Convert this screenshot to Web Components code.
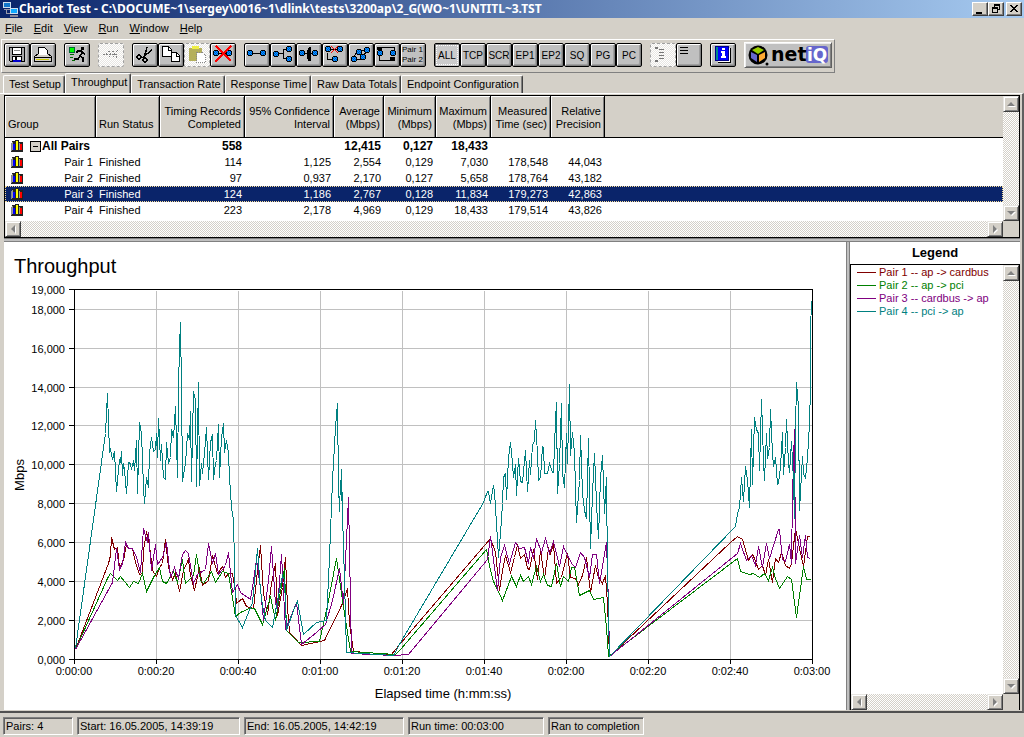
<!DOCTYPE html>
<html lang="en">
<head>
<meta charset="utf-8">
<title>Chariot Test</title>
<style>
  body {
    margin: 0;
    background: #d4d0c8;
    color: #000;
    font: 11px/13px "Liberation Sans", Arial, sans-serif;
  }
</style>
</head>
<body>
<chariot-app></chariot-app>

<script>
const BASE = `
  * { box-sizing: border-box; }
  button { font: inherit; color: inherit; margin: 0; padding: 0; border: 0; background: none; }
  svg { display: block; }
`;

function define(name, html, setup) {
  const template = document.createElement('template');
  template.innerHTML = html.replace('<style>', `<style>${BASE}`);
  customElements.define(name, class extends HTMLElement {
    constructor() {
      super();
      this._root = this.attachShadow({ mode: 'open' });
    }
    connectedCallback() {
      if (this._root.firstChild) return;
      this._root.appendChild(template.content.cloneNode(true));
      if (setup) setup(this, this._root);
    }
  });
}

/* ---------- title bar ---------- */
define('title-bar', `
<style>
  :host {
    display: flex;
    align-items: center;
    height: 18px;
    padding: 0 2px 0 3px;
    background: linear-gradient(90deg, #0a246a, #a6caf0);
    color: #fff;
    font: bold 12px/18px "Noto Sans", "DejaVu Sans", sans-serif;
    white-space: nowrap;
  }
  h1 { flex: 1; min-width: 0; overflow: hidden; margin: 0; font: inherit; }
  button {
    width: 16px; height: 14px;
    background: #d4d0c8;
    border: 1px solid;
    border-color: #fff #404040 #404040 #fff;
    box-shadow: inset -1px -1px #808080;
  }
  button:last-child { margin-left: 2px; }
</style>
<svg width="16" height="16" viewBox="0 0 16 16" shape-rendering="crispEdges">
  <path d="M0 1h8v6H0z" fill="#cde"/><path d="M1 2h6v4H1z" fill="#17c"/>
  <path d="M1 8h7v1H1zM3 9v4h5v-1H4V9z" fill="#99a"/>
  <path d="M7 7h8v6H7z" fill="#cde"/><path d="M8 8h6v4H8z" fill="#1af"/>
  <path d="M7 14h8v2H7z" fill="#889"/>
</svg>
<h1><slot></slot></h1>
<button aria-label="Minimize"><svg width="14" height="12" shape-rendering="crispEdges"><path d="M3 9h6v2H3z"/></svg></button>
<button aria-label="Restore"><svg width="14" height="12" shape-rendering="crispEdges"><path d="M5 1h6v6H9V6h1V3H6v1H5zM3 4h6v6H3zM4 6v3h4V6z" fill-rule="evenodd"/></svg></button>
<button aria-label="Close"><svg width="14" height="12" shape-rendering="crispEdges"><path d="M3 2h2v1h1v1h2V3h1V2h2v1h-1v1H9v1H8v1h1v1h1v1h1v1H9V8H8V7H6v1H5v1H3V8h1V7h1V6h1V5H5V4H4V3H3z"/></svg></button>
`);

/* ---------- menu ---------- */
define('menu-bar', `
<style>
  :host { display: flex; gap: 11px; height: 21px; padding: 0 5px; align-items: center; }
  button::first-letter { text-decoration: underline; }
</style>
`, (el, root) => {
  el.getAttribute('items').split(',').forEach(text => {
    const $b = document.createElement('button');
    $b.textContent = text;
    root.appendChild($b);
  });
});

/* ---------- toolbar ---------- */
const node = (x, y) => `<path d="M${x + 1} ${y}h4v1h1v4h-1v1h-4v-1h-1v-4h1z" fill="#000"/><path d="M${x + 1} ${y + 1}h4v4h-4z" fill="#0af"/><path d="M${x + 2} ${y + 1}h1v1h-1zM${x + 4} ${y + 1}h1v1h-1zM${x + 1} ${y + 2}h1v1h-1zM${x + 3} ${y + 2}h1v1h-1zM${x + 2} ${y + 3}h1v1h-1zM${x + 4} ${y + 3}h1v1h-1zM${x + 1} ${y + 4}h1v1h-1zM${x + 3} ${y + 4}h1v1h-1z" fill="#04c"/>`;
const line = d => `<path d="${d}" fill="none" stroke="#000"/>`;

const ICONS = {
  save: `<path d="M5 4h16v15H6l-1-1z" fill="#000"/><path d="M6 5h14v13H6z" fill="#aaa"/><path d="M8 5h10v7H8z" fill="#000"/><path d="M9 5h8v6H9z" fill="#fff"/><path d="M10 7h6v1h-6z" fill="#888"/><path d="M8 13h10v6H8z" fill="#000"/><path d="M9 14h8v3H9z" fill="#fff"/><path d="M9 17h8v2H9z" fill="#00c"/><path d="M11 14h2v3h-2z" fill="#000"/>`,
  print: `<path d="M8.500 4.500h6l3 3v5h-9z" fill="#fff" stroke="#000"/><path d="M4.500 13.500l4-3h9l4 3v5h-17z" fill="#d4d0c8" stroke="#000"/><path d="M5 14.500h16" stroke="#000"/><path d="M9 8h8v4H9z" fill="#fff"/><path d="M6 16.500h13" stroke="#cc0"/>`,
  run: `<circle cx="8" cy="7" r="3" fill="#0f0" stroke="#063"/><path d="M6 11.500h4M6 14.500h3M8 17.500h3" stroke="#060"/><path d="M17 4h3v3h-3z" fill="#000"/><path d="M12 10l2-2h3l1 2-2 3 3 2v4M16 13l-2 3h-4M18 9l3 2" fill="none" stroke="#000" stroke-width="1.500"/>`,
  stop: `<path d="M5 11h15M8 11l4-3M8 11l4 3M12 11l4-3M12 11l4 3M16 11l4-4M16 11l4 5" stroke="#808080" fill="none" stroke-dasharray="2 1"/>`,
  cut: `<path d="M15 4l-3 11M20 7l-9 7" stroke="#000" stroke-width="1.500" fill="none"/><circle cx="7" cy="14" r="2" fill="none" stroke="#000" stroke-width="1.500"/><circle cx="13" cy="17" r="2" fill="none" stroke="#000" stroke-width="1.500"/><path d="M9 14h4" stroke="#000"/>`,
  copy: `<path d="M4.500 3.500h6l3 3v7h-9zM13.500 9.500h5l3 3v6h-8z" fill="#fff" stroke="#000"/><path d="M10.500 4v3h3M18.500 10v3h3" fill="none" stroke="#000"/>`,
  paste: `<path d="M5 5h13v13H5z" fill="#b5b05c"/><path d="M8 3h7v3H8z" fill="#ee4"/><path d="M12.500 9.500h6l3 3v7h-9z" fill="#fff" stroke="#888" stroke-dasharray="1 1"/>`,
  del: `${node(3, 7)}${node(16, 7)}${line('M9 10.500h7')}<path d="M6 3l15 15M21 3L5 19" stroke="#f00" stroke-width="2" fill="none"/>`,
  pair: `${line('M9 10.500h8')}${node(3, 7)}${node(16, 7)}`,
  group: `${line('M8 10.500h5M17 6.500h-4v9h4')}${node(3, 8)}${node(16, 3)}${node(16, 13)}`,
  multi: `${line('M8 10.500h9')}<path d="M13 4h2v14h-3v-2h-1V7h1V5h1z"/>${node(3, 7)}${node(16, 7)}`,
  ungroup: `${line('M5.500 10v6h6M8 6.500h9')}${node(3, 3)}${node(15, 3)}${node(10, 13)}<path d="M9 3l7 7M16 3l-7 7" stroke="#f00"/>`,
  clone: `${line('M5 16l5-9h9l-5 9zM10 7l4 9')}${node(3, 13)}${node(8, 6)}${node(12, 11)}${node(16, 4)}`,
  swap: `${line('M5.500 13v4h13M20.500 9V4h-14')}<path d="M3 4h5v3H3zM16 14h5v4h-5z"/>${node(3, 7)}${node(16, 7)}`,
  labels: `<text x="2" y="9" font-size="8">Pair 1</text><text x="2" y="19" font-size="8">Pair 2</text>`,
  tree: `<path d="M5 4h3v2H5zM9 6h5v1H9zM9 9h5v1H9zM9 12h5v1H9zM9 15h5v1H9zM5 17h3v2H5z" fill="#777"/>`,
  lines: `<path d="M4 4h8v1H4zM4 7h8v1H4zM4 10h8v1H4z"/>`,
  info: `<path d="M8 5h13v15H8z" fill="#000"/><path d="M8 5h12v14H8z" fill="#fff"/><path d="M5 3h14v15H5z" fill="#00f"/><path d="M5.500 3.500h13v14h-13z" fill="none" stroke="#008"/><path d="M6 4h2v13H6z" fill="#088"/><path d="M12 5h3v2h-3zM11 8h4v5h1v2h-5v-2h1v-3h-1z" fill="#fff"/>`,
};

define('tool-button', `
<style>
  :host { display: block; flex: none; }
  button {
    display: grid;
    place-items: center;
    width: 26px; height: 24px;
    border: 1px solid #000;
    border-radius: 2px;
    background: #c0c0c0;
    box-shadow: inset 1px 1px #fff, inset -1px -1px #808080, inset -2px -2px #a0a0a0;
    font-size: 10px;
  }
  svg { margin: -1px; }
  button:disabled {
    border: 1px dashed #a0a0a0;
    background: repeating-conic-gradient(#fff 0 25%, #e8e6e2 0 50%) 0 0 / 2px 2px;
    box-shadow: none;
  }
  button[aria-pressed="true"] {
    background: #ccc;
    box-shadow: inset 1px 1px #808080;
    outline: 1px dotted #fff;
    outline-offset: -3px;
  }
</style>
<button><slot></slot></button>
`, (el, root) => {
  const $b = root.querySelector('button');
  const icon = el.getAttribute('icon');
  if (icon) {
    $b.setAttribute('aria-label', icon);
    $b.innerHTML = `<svg width="26" height="24" viewBox="0 0 26 24" shape-rendering="crispEdges">${ICONS[icon]}</svg>`;
  }
  $b.disabled = el.hasAttribute('off');
  if (el.hasAttribute('pressed')) $b.setAttribute('aria-pressed', 'true');
});

define('netiq-logo', `
<style>
  :host { display: block; flex: none; }
  div {
    width: 88px; height: 26px;
    background: #c0c0c0;
    border: 1px solid;
    border-color: #fff #606060 #606060 #fff;
    box-shadow: inset 1px 1px #eee, inset -1px -1px #808080;
  }
</style>
<div>
<svg width="86" height="24" viewBox="0 0 86 24">
  <circle cx="13" cy="12" r="9.500"/>
  <path d="M13 4l6 3-6 4-6-4z" fill="#9c0"/>
  <path d="M6 9l6 3v7l-6-4z" fill="#66c"/>
  <path d="M20 9l-6 3v7l6-4z" fill="#fa3"/>
  <circle cx="22" cy="21" r="1.500"/>
  <rect x="61" y="3" width="22" height="17" rx="3" fill="#66c"/>
  <text x="26" y="18" font-family="DejaVu Sans" font-weight="bold" font-size="19">net</text>
  <text x="62" y="18" font-family="DejaVu Sans" font-weight="bold" font-size="17" fill="#fff">iQ</text>
</svg>
</div>
`);

define('tool-bar', `
<style>
  :host {
    display: flex;
    gap: 8px;
    align-items: center;
    width: fit-content;
    margin-left: 1px;
    padding: 2px 2px 4px;
    border: 1px solid;
    border-color: #fff #808080 #808080 #fff;
  }
  .group { display: flex; }
</style>
<div class="group"><tool-button icon="save"></tool-button><tool-button icon="print"></tool-button></div>
<div class="group"><tool-button icon="run"></tool-button></div>
<div class="group"><tool-button icon="stop" off></tool-button></div>
<div class="group">
  <tool-button icon="cut"></tool-button><tool-button icon="copy"></tool-button>
  <tool-button icon="paste" off></tool-button><tool-button icon="del"></tool-button>
</div>
<div class="group">
  <tool-button icon="pair"></tool-button><tool-button icon="group"></tool-button>
  <tool-button icon="multi"></tool-button><tool-button icon="ungroup"></tool-button>
  <tool-button icon="clone"></tool-button><tool-button icon="swap"></tool-button>
  <tool-button icon="labels"></tool-button>
</div>
<div class="group">
  <tool-button pressed>ALL</tool-button><tool-button>TCP</tool-button>
  <tool-button>SCR</tool-button><tool-button>EP1</tool-button>
  <tool-button>EP2</tool-button><tool-button>SQ</tool-button>
  <tool-button>PG</tool-button><tool-button>PC</tool-button>
</div>
<div class="group"><tool-button icon="tree" off></tool-button><tool-button icon="lines"></tool-button></div>
<div class="group"><tool-button icon="info"></tool-button></div>
<netiq-logo></netiq-logo>
`);

/* ---------- tabs ---------- */
define('tab-strip', `
<style>
  :host { display: flex; align-items: flex-end; height: 20px; padding-left: 3px; }
  button {
    height: 18px;
    padding: 0 3px 0 5px;
    border: 1px solid;
    border-color: #fff #404040 transparent #fff;
    border-bottom: 0;
    border-radius: 2px 2px 0 0;
    box-shadow: inset -1px 0 #808080;
    white-space: nowrap;
  }
  button[aria-selected="true"] {
    height: 20px;
    padding-bottom: 3px;
  }
</style>
`, (el, root) => {
  el.getAttribute('items').split(',').forEach(text => {
    const $b = document.createElement('button');
    $b.setAttribute('role', 'tab');
    $b.setAttribute('aria-selected', text === el.getAttribute('active'));
    $b.textContent = text;
    root.appendChild($b);
  });
});

/* ---------- scroll bar ---------- */
define('scroll-bar', `
<style>
  :host {
    display: flex;
    flex-direction: column;
    justify-content: space-between;
    background: repeating-conic-gradient(#fff 0 25%, #d4d0c8 0 50%) 0 0 / 2px 2px;
  }
  :host([horizontal]) { flex-direction: row; }
  button {
    width: 16px; height: 16px;
    background: #d4d0c8;
    border: 1px solid;
    border-color: #e8e6e2 #404040 #404040 #e8e6e2;
    box-shadow: inset 1px 1px #fff, inset -1px -1px #808080;
  }
</style>
`, (el, root) => {
  const arrows = el.hasAttribute('horizontal')
    ? { Left: 'M9 3v8L5 7z', Right: 'M5 3v8l4-4z' }
    : { Up: 'M3 9h8L7 5z', Down: 'M3 5h8L7 9z' };
  for (const [name, d] of Object.entries(arrows)) {
    const $b = document.createElement('button');
    $b.setAttribute('aria-label', name);
    $b.innerHTML = `<svg width="14" height="14"><path d="${d}" fill="#fff" transform="translate(1 1)"/><path d="${d}" fill="#808080"/></svg>`;
    root.appendChild($b);
  }
});

/* ---------- results table ---------- */
const COLUMNS = [
  ['Group', 91], ['Run Status', 64], ['Timing Records<br>Completed', 85],
  ['95% Confidence<br>Interval', 89], ['Average<br>(Mbps)', 50], ['Minimum<br>(Mbps)', 52],
  ['Maximum<br>(Mbps)', 55], ['Measured<br>Time (sec)', 60], ['Relative<br>Precision', 54],
];
const ROWS = [
  ['All Pairs', '', '558', '', '12,415', '0,127', '18,433', '', ''],
  ['Pair 1', 'Finished', '114', '1,125', '2,554', '0,129', '7,030', '178,548', '44,043'],
  ['Pair 2', 'Finished', '97', '0,937', '2,170', '0,127', '5,658', '178,764', '43,182'],
  ['Pair 3', 'Finished', '124', '1,186', '2,767', '0,128', '11,834', '179,273', '42,863'],
  ['Pair 4', 'Finished', '223', '2,178', '4,969', '0,129', '18,433', '179,514', '43,826'],
];
const BARS = `<svg width="13" height="12" shape-rendering="crispEdges"><path d="M1 1h3v10H1zM4 0h4v11H4zM8 2h4v9H8zM0 11h12v1H0z" fill="#222"/><path d="M0 3h1v8H0z" fill="#888"/><path d="M2 4h2v6H2z" fill="#00f"/><path d="M5 1h2v9H5z" fill="#ff0"/><path d="M9 4h2v6H9z" fill="#f00"/><path d="M1 2h1v8H1zM8 3h1v7H8z" fill="#999"/></svg>`;

define('pair-table', `
<style>
  :host {
    display: grid;
    grid-template-columns: 1fr 16px;
    grid-template-rows: 125px 16px;
    border: 1px solid #000;
    background: #d4d0c8;
  }
  .view { background: #fff; overflow: hidden; }
  table { width: 100%; table-layout: fixed; border-collapse: separate; border-spacing: 0; }
  th, td { padding: 0 3px; text-align: right; font-weight: inherit; white-space: nowrap; }
  thead th {
    height: 42px;
    padding-bottom: 6px;
    vertical-align: bottom;
    background: #d4d0c8;
    border-right: 1px solid #000;
    border-bottom: 1px solid #000;
    box-shadow: inset 1px 1px #fff, inset -1px 0 #808080;
  }
  thead td { border-bottom: 1px solid #000; background: #d4d0c8; }
  th:nth-child(-n+2), td:nth-child(2) { text-align: left; }
  tbody td, tbody th { height: 16px; }
  tbody th div { display: flex; align-items: center; justify-content: space-between; padding-left: 3px; }
  tbody tr:first-child { font-weight: bold; font-size: 12px; }
  tbody tr:first-child div { justify-content: flex-start; gap: 1px; }
  .fold {
    width: 11px; height: 11px;
    margin-left: 5px;
    background: #d4d0c8;
    border: 1px solid #000;
  }
  .fold::before { content: ""; display: block; width: 5px; height: 1px; margin: 0 auto; background: #000; }
  .selected { background: #0a246a; color: #fff; outline: 1px dotted #f5db95; outline-offset: -1px; }
</style>
<div class="view"><table><colgroup></colgroup><thead><tr></tr></thead><tbody></tbody></table></div>
<scroll-bar></scroll-bar>
<scroll-bar horizontal></scroll-bar>
`, (el, root) => {
  root.querySelector('colgroup').innerHTML = COLUMNS.map(c => `<col style="width:${c[1]}px">`).join('') + '<col>';
  root.querySelector('thead tr').innerHTML = COLUMNS.map(c => `<th scope="col">${c[0]}</th>`).join('') + '<td></td>';
  root.querySelector('tbody').innerHTML = ROWS.map((row, i) => {
    const fold = i === 0 ? '<button class="fold" aria-label="Collapse"></button>' : '';
    const cells = row.slice(1).map(v => `<td>${v}</td>`).join('');
    return `<tr class="${i === 3 ? 'selected' : ''}"><th scope="row"><div>${BARS}${fold}<span>${row[0]}</span></div></th>${cells}<td></td></tr>`;
  }).join('');
});

/* ---------- throughput chart ---------- */
const SERIES = [
  ['#800000', '75,649 108,563 110,555 111,537 114,549 117,547 119,567 123,560 126,544 128,548 132,548 135,562 139,574 142,573 143,550 146,531 149,545 152,570 156,576 159,567 162,563 165,539 168,567 172,579 175,573 179,591 183,570 188,559 190,575 194,590 199,567 202,585 208,580 212,555 217,573 222,566 225,577 228,573 232,573 235,592 236,603 242,598 246,606 249,607 253,608 257,570 260,545 263,593 267,614 271,583 275,563 277,615 282,587 285,557 287,607 289,632 301,645 324,640 342,603 347,588 349,623 353,651 391,654 400,643 490,538 495,552 499,590 502,570 505,555 510,572 514,557 517,544 520,558 524,554 527,568 529,569 533,549 537,579 540,550 544,578 548,548 550,553 553,544 556,583 561,577 567,553 570,577 575,578 578,584 582,575 586,557 590,592 595,565 597,574 602,583 605,575 607,603 609,656 730,542 737,536 742,539 748,560 752,554 754,558 758,569 762,565 765,575 768,559 772,582 775,558 778,562 781,552 785,565 789,568 791,563 795,528 799,548 803,566 807,536 809,536'],
  ['#008000', '75,649 107,578 110,573 117,580 120,576 129,587 133,581 138,583 142,573 146,591 153,577 159,567 162,581 166,583 173,571 177,582 182,559 185,583 193,575 196,554 200,580 203,583 211,571 215,582 222,571 228,573 235,616 240,612 249,608 254,608 262,624 266,610 270,596 275,620 284,568 286,630 298,642 319,641 327,605 336,558 342,600 350,651 395,654 400,649 486,549 490,570 493,581 502,600 511,576 516,586 520,575 523,581 528,576 531,584 536,566 540,581 543,574 547,585 551,586 556,563 560,586 563,576 568,581 571,567 574,567 579,595 589,590 593,599 603,597 606,627 608,656 737,558 740,571 749,574 753,573 759,577 764,573 768,580 772,567 775,578 779,588 787,576 791,579 796,617 803,566 806,579 810,579'],
  ['#800080', '75,649 112,582 116,548 119,569 122,563 125,542 128,548 132,548 136,557 140,572 143,528 147,542 148,532 151,570 155,544 157,564 162,557 166,542 170,577 174,567 178,578 182,554 185,550 188,553 193,583 197,574 205,569 208,543 212,563 215,553 218,574 225,565 228,552 232,592 237,584 240,592 250,599 253,580 256,559 260,588 263,620 268,580 271,546 275,603 277,608 281,554 285,629 290,617 296,602 301,644 316,632 325,624 332,600 339,568 343,603 348,497 351,653 393,655 408,654 487,559 490,536 497,590 500,557 504,545 509,563 515,542 519,548 524,547 528,563 530,547 533,558 536,538 541,552 545,538 549,553 553,541 559,566 563,546 567,555 572,564 575,567 580,552 584,557 589,577 592,554 596,554 599,583 606,542 608,603 609,656 737,553 740,543 746,560 751,555 755,565 758,546 762,567 766,543 769,558 778,529 779,529 782,559 785,561 789,544 791,563 792,495 794,429 795,563 799,535 802,557 805,535 807,557 810,558'],
  ['#008080', '75,648 105,433 107,393 109,452 110,449 112,459 114,451 116,491 119,459 120,462 121,451 122,475 123,463 124,470 126,493 128,462 130,463 131,469 133,460 134,470 136,440 137,493 139,422 141,433 143,487 144,503 146,477 148,487 149,452 151,437 153,451 155,449 156,433 157,457 158,418 160,460 161,444 163,477 165,479 166,442 168,463 170,457 171,429 173,437 175,406 177,477 178,390 179,345 180,322 181,388 182,481 185,463 187,433 189,439 190,411 191,481 193,391 195,400 196,486 198,382 199,485 201,463 202,473 204,453 206,427 208,479 210,442 212,434 213,479 215,463 216,460 218,424 219,477 221,437 223,423 224,452 226,440 228,453 229,477 231,507 233,520 234,563 235,615 242,627 252,602 254,582 257,548 260,590 262,605 265,620 272,627 277,600 282,575 284,580 286,630 293,610 297,601 303,634 316,622 326,620 329,557 332,480 335,427 337,403 338,483 339,511 340,480 341,500 341,469 342,513 344,580 346,652 393,655 400,642 483,502 487,491 488,491 490,503 493,485 494,491 496,523 498,557 500,533 502,503 503,477 505,473 506,499 508,457 510,442 512,463 513,477 515,464 516,495 518,458 520,481 522,482 525,450 527,491 529,460 530,474 532,445 534,440 535,420 537,453 538,480 540,477 542,446 543,447 544,473 547,473 549,463 552,472 553,472 555,420 556,402 557,493 559,463 561,403 562,473 564,487 566,433 567,463 569,384 570,455 572,432 574,453 576,522 579,480 580,435 582,493 584,510 586,518 588,438 590,548 592,493 594,453 596,503 598,538 600,477 602,455 604,513 606,477 607,570 609,656 735,526 737,513 739,507 741,477 743,501 745,466 747,480 749,507 751,429 752,484 754,417 756,429 758,433 759,470 761,399 763,460 764,480 766,433 767,458 769,447 770,409 772,453 773,466 775,457 777,484 778,483 780,467 782,432 783,474 785,447 786,419 788,463 789,472 791,441 793,480 794,518 795,430 796,382 798,407 799,510 802,456 803,473 805,478 807,457 809,423 810,387 810,330 811,301'],
];
const Y_TICKS = [
  ['0,000', 659], ['2,000', 620], ['4,000', 581], ['6,000', 542], ['8,000', 503], ['10,000', 464],
  ['12,000', 425], ['14,000', 387], ['16,000', 348], ['18,000', 309], ['19,000', 289],
];
const X_TICKS = ['0:00:00', '0:00:20', '0:00:40', '0:01:00', '0:01:20', '0:01:40', '0:02:00', '0:02:20', '0:02:40', '0:03:00'];

define('throughput-chart', `
<style>
  :host { display: block; background: #fff; min-width: 0; }
  svg { width: 100%; height: 100%; }
  .lines { fill: none; shape-rendering: crispEdges; }
  text { font-size: 11px; }
  .title { font-size: 20px; }
  .axis { font-size: 13px; }
</style>
<svg viewBox="4 242 842 468"></svg>
`, (el, root) => {
  const grid = Y_TICKS.slice(1, -1).map(t => `M75 ${t[1] + 0.5}H813`).join('')
    + X_TICKS.slice(1, -1).map((t, i) => `M${156.5 + i * 82} 291V659`).join('');
  const ticks = Y_TICKS.map(t => `M69 ${t[1] + 0.5}h5`).join('')
    + X_TICKS.map((t, i) => `M${74.5 + i * 82} 659v5`).join('');
  root.querySelector('svg').innerHTML = `
    <g class="lines">
      <path d="${grid}" stroke="#c0c0c0"/>
      <path d="M74.5 659.5V289.5H813M812.5 290V659.5H74${ticks}" stroke="#000"/>
      ${SERIES.map(s => `<polyline points="${s[1]}" stroke="${s[0]}" transform="translate(.5 .5)"/>`).join('')}
    </g>
    <text class="title" x="14" y="273">Throughput</text>
    ${Y_TICKS.map(t => `<text x="65" y="${t[1] + 5}" text-anchor="end">${t[0]}</text>`).join('')}
    ${X_TICKS.map((t, i) => `<text x="${74 + i * 82}" y="675" text-anchor="middle">${t}</text>`).join('')}
    <text class="axis" x="443" y="698" text-anchor="middle">Elapsed time (h:mm:ss)</text>
    <text class="axis" text-anchor="middle" transform="translate(24 475) rotate(-90)">Mbps</text>`;
});

/* ---------- legend ---------- */
define('chart-legend', `
<style>
  :host { display: flex; flex-direction: column; background: #fff; }
  h2 { margin: 0; font-size: 13px; line-height: 22px; text-align: center; }
  .box {
    flex: 1;
    display: grid;
    grid-template: 1fr 16px / 1fr 16px;
    border: 1px solid #000;
    border-bottom: 0;
    background: #d4d0c8;
  }
  ul { margin: 0; padding: 1px 0 0 6px; list-style: none; background: #fff; }
  li { display: flex; align-items: center; gap: 3px; white-space: nowrap; }
  li::before { content: ""; width: 19px; height: 1px; background: currentColor; }
</style>
<h2>Legend</h2>
<div class="box">
  <ul>
    <li style="color:#800000">Pair 1 -- ap -&gt; cardbus</li>
    <li style="color:#008000">Pair 2 -- ap -&gt; pci</li>
    <li style="color:#800080">Pair 3 -- cardbus -&gt; ap</li>
    <li style="color:#008080">Pair 4 -- pci -&gt; ap</li>
  </ul>
  <scroll-bar></scroll-bar>
  <scroll-bar horizontal></scroll-bar>
</div>
`);

/* ---------- status bar ---------- */
define('status-bar', `
<style>
  :host { display: flex; gap: 4px; padding: 4px 3px 2px; }
  ::slotted(span) {
    box-sizing: border-box;
    height: 18px;
    padding: 0 2px;
    border: 1px solid;
    border-color: #808080 #fff #fff #808080;
    box-shadow: inset 1px 1px #606060;
    line-height: 17px;
    white-space: nowrap;
  }
</style>
<slot></slot>
`);

/* ---------- window ---------- */
define('chariot-app', `
<style>
  :host { display: flex; flex-direction: column; min-height: 100vh; }
  main {
    flex: 1;
    display: flex;
    flex-direction: column;
    padding: 1px 2px 1px 4px;
    border-top: 1px solid #fff;
    border-right: 2px solid #606060;
    border-bottom: 2px solid #505050;
  }
  .split { background: #c0c0c0; border: solid #808080; }
  .rows { height: 4px; border-width: 1px 0; }
  .cols { width: 4px; border-width: 0 1px; }
  .panes { flex: 1; display: grid; grid-template-columns: 1fr 4px 170px; }
</style>
<title-bar>Chariot Test - C:\\DOCUME~1\\sergey\\0016~1\\dlink\\tests\\3200ap\\2_G(WO~1\\UNTITL~3.TST</title-bar>
<menu-bar items="File,Edit,View,Run,Window,Help"></menu-bar>
<tool-bar></tool-bar>
<tab-strip active="Throughput" items="Test Setup,Throughput,Transaction Rate,Response Time,Raw Data Totals,Endpoint Configuration"></tab-strip>
<main>
  <pair-table></pair-table>
  <div class="split rows"></div>
  <div class="panes">
    <throughput-chart></throughput-chart>
    <div class="split cols"></div>
    <chart-legend></chart-legend>
  </div>
</main>
<status-bar>
  <span style="width:70px">Pairs: 4</span>
  <span style="width:163px">Start: 16.05.2005, 14:39:19</span>
  <span style="width:160px">End: 16.05.2005, 14:42:19</span>
  <span style="width:136px">Run time: 00:03:00</span>
  <span style="width:96px">Ran to completion</span>
</status-bar>
`);
</script>
</body>
</html>
